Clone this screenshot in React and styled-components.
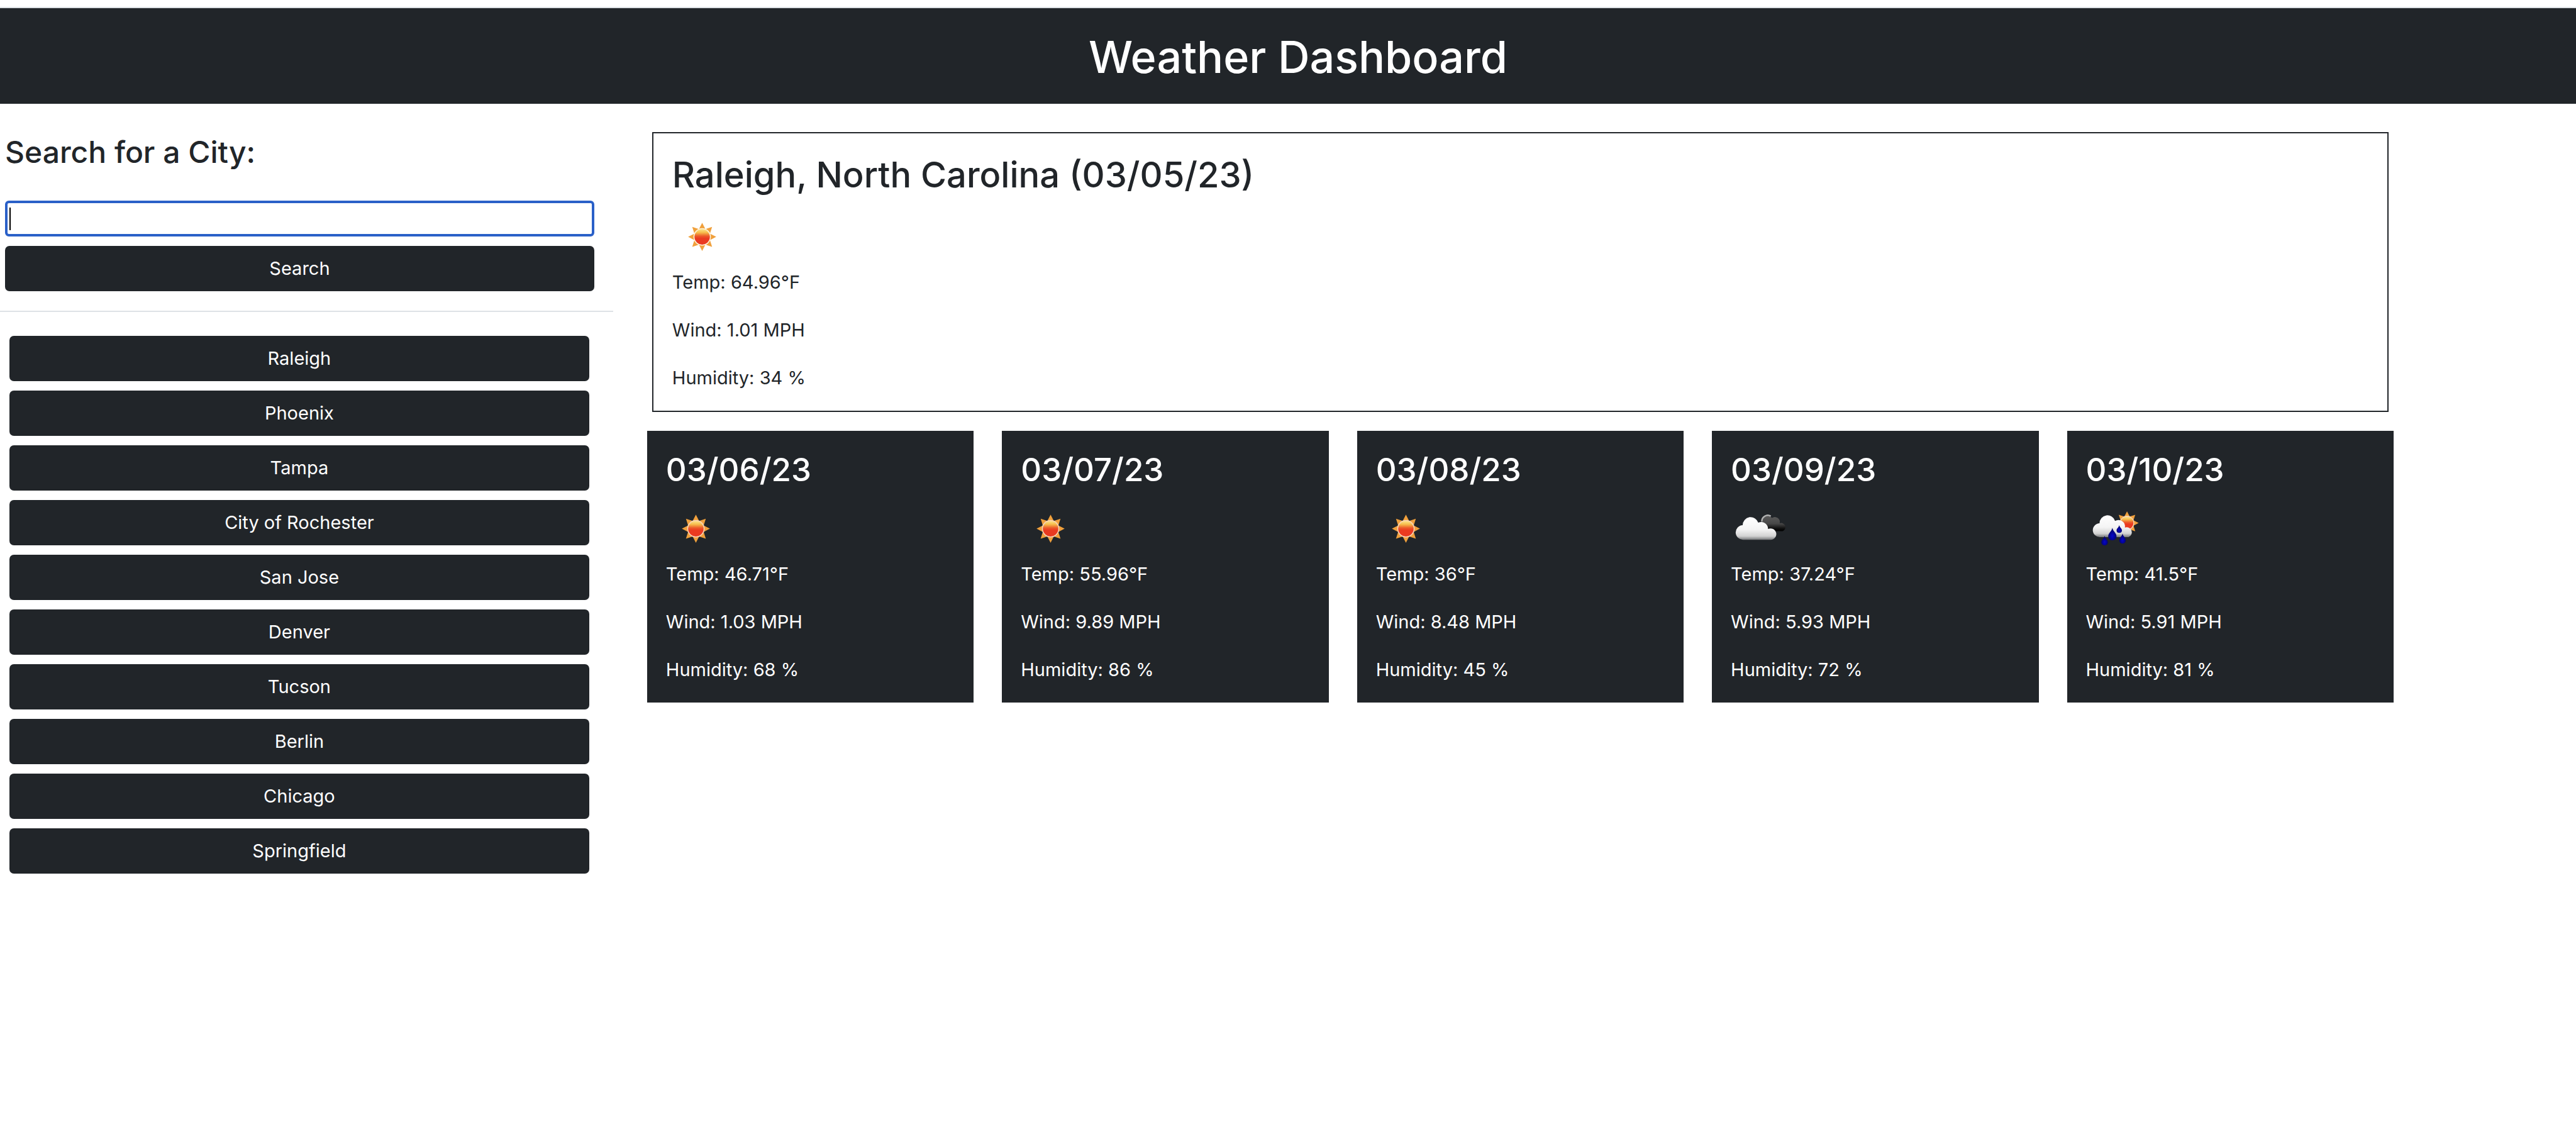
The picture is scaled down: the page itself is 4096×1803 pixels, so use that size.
import React from "react";
import styled, { createGlobalStyle } from "styled-components";

const ink = "#212529";
const line = "#dee2e6";

const GlobalStyle = createGlobalStyle`
  *, *::before, *::after { box-sizing: border-box; }
  body {
    margin: 0;
    background: #fff;
    color: ${ink};
    font-family: Inter, "Liberation Sans", sans-serif;
    font-size: 29px;
    line-height: 46px;
  }
  h1, h2, h3, p { margin: 0; }
`;

const Header = styled.header`
  margin-top: 11px;
  padding: 32px 0 28px 32px;
  border-top: 2px solid ${line};
  background: ${ink};
  background-clip: padding-box;
  color: #fff;
  text-align: center;
`;

const PageTitle = styled.h1`
  font-size: 70px;
  line-height: 92px;
  font-weight: 500;
`;

const Layout = styled.div`
  display: flex;
  align-items: flex-start;
  gap: 54px;
  padding-top: 45px;
`;

const Sidebar = styled.aside`
  flex: 0 0 23.8%;
`;

const SearchForm = styled.form`
  display: flex;
  flex-direction: column;
  gap: 15px;
  padding: 0 30px 31px 8px;
  border-bottom: 2px solid ${line};
`;

const SearchLabel = styled.label`
  margin-bottom: 30px;
  font-size: 48px;
  line-height: 64px;
  font-weight: 500;
`;

const SearchInput = styled.input`
  height: 57px;
  padding: 0 8px;
  border: 4px solid #2a60c8;
  border-radius: 6px;
  outline: 0;
  font: inherit;
  color: ${ink};
  background: linear-gradient(#000, #000) 3px 50% / 2px 36px no-repeat #fff;
`;

const Button = styled.button`
  display: block;
  width: 100%;
  height: 72px;
  padding: 0;
  border: 0;
  border-radius: 7px;
  background: ${ink};
  color: #fff;
  font: inherit;
  cursor: pointer;
`;

const History = styled.div`
  display: flex;
  flex-direction: column;
  gap: 15px;
  padding: 38px 38px 0 15px;
`;

const Main = styled.main`
  flex: 0 0 67.8%;
`;

const Current = styled.section`
  margin: 0 8px 30px;
  padding: 30px 30px 29px;
  border: 2px solid ${ink};
`;

const CurrentTitle = styled.h2`
  font-size: 56px;
  line-height: 73px;
  font-weight: 500;
`;

const Forecast = styled.section`
  display: grid;
  grid-template-columns: repeat(5, 1fr);
  gap: 45px;
`;

const Card = styled.article`
  padding: 30px 30px 29px;
  background: ${ink};
  color: #fff;
`;

const CardTitle = styled.h3`
  font-size: 51px;
  line-height: 64px;
  font-weight: 500;
`;

const Icon = styled.svg`
  display: block;
  width: 95px;
  height: 95px;
  margin-top: 16px;
`;

const Readings = styled.div`
  display: flex;
  flex-direction: column;
  gap: 30px;
`;

const star = (cx, cy, R, r) =>
  Array.from({ length: 16 }, (_, i) => {
    const a = (i * Math.PI) / 8 - Math.PI / 2;
    const d = i % 2 ? r : R;
    return `${cx + d * Math.cos(a)},${cy + d * Math.sin(a)}`;
  }).join(" ");

function Defs() {
  return (
    <defs>
      <linearGradient id="sunFill" x1="0" y1="0" x2="0" y2="1">
        <stop offset="0" stopColor="#fbe48a" />
        <stop offset="0.22" stopColor="#f6bd4b" />
        <stop offset="0.45" stopColor="#ec5a2a" />
        <stop offset="0.6" stopColor="#ea3a20" />
        <stop offset="1" stopColor="#ea3a20" />
      </linearGradient>
      <linearGradient id="cloudFill" x1="0" y1="0" x2="0" y2="1">
        <stop offset="0" stopColor="#fff" />
        <stop offset="0.55" stopColor="#f4f4f4" />
        <stop offset="0.84" stopColor="#d2d2d2" />
        <stop offset="1" stopColor="#77797b" />
      </linearGradient>
      <linearGradient id="darkFill" x1="0" y1="0" x2="0" y2="1">
        <stop offset="0" stopColor="#5a5a5a" />
        <stop offset="0.5" stopColor="#484848" />
        <stop offset="0.85" stopColor="#0c0c0c" />
        <stop offset="1" stopColor="#000" />
      </linearGradient>
      <radialGradient id="dropFill" cx="0.5" cy="0.65" r="0.5">
        <stop offset="0" stopColor="#0606cc" />
        <stop offset="1" stopColor="#020270" />
      </radialGradient>
    </defs>
  );
}

function Sun({ cx, cy, size, rim }) {
  return (
    <g>
      <polygon points={star(cx, cy, size, size * 0.6)} fill="#f0a03c" />
      <circle cx={cx} cy={cy} r={size * 0.62} fill={rim} />
      <circle cx={cx} cy={cy} r={size * 0.55} fill="url(#sunFill)" />
    </g>
  );
}

const drop = (x, y, w, h) =>
  `M${x} ${y}C${x + w * 0.1} ${y + h * 0.3} ${x + w / 2} ${y + h * 0.42} ${x + w / 2} ${y + h * 0.68}` +
  `A${w / 2} ${h * 0.32} 0 0 1 ${x - w / 2} ${y + h * 0.68}` +
  `C${x - w / 2} ${y + h * 0.42} ${x - w * 0.1} ${y + h * 0.3} ${x} ${y}Z`;

function WeatherIcon({ kind, dark }) {
  return (
    <Icon viewBox="0 0 100 100" role="img" aria-label={kind}>
      <Defs />
      {kind === "clear" && (
        <Sun cx={50} cy={48} size={23.5} rim={dark ? "#f6d3b8" : "#fff3dc"} />
      )}
      {kind === "clouds" && (
        <g>
          <path
            d="M51 38A10.5 10.5 0 0 1 69 30A8.5 8.5 0 0 1 82 39A6.5 6.5 0 0 1 87 52H62Z"
            fill="url(#darkFill)"
          />
          <path d="M52 36A10 10 0 0 1 67 27" fill="none" stroke="#b4b4b4" strokeWidth="2.5" />
          <path
            d="M21 66.5A12.2 12.2 0 0 1 20 42A13.3 13.3 0 0 1 46 38A11.5 11.5 0 0 1 62.500 48.500A9.500 9.500 0 1 1 67 66.500Z"
            fill="url(#cloudFill)"
          />
        </g>
      )}
      {kind === "rain" && (
        <g>
          <Sun cx={68.5} cy={38.5} size={19.5} rim="#f6d3b8" />
          <path
            d="M23 62A11.500 11.500 0 0 1 22.500 39A13.300 13.300 0 0 1 48.500 35A11 11 0 0 1 65 46A8.500 8.500 0 1 1 71 62Z"
            fill="url(#cloudFill)"
          />
          <path d={drop(55.5, 42, 9, 13)} fill="url(#dropFill)" />
          <path d={drop(44, 46.5, 14, 21)} fill="url(#dropFill)" />
          <path d={drop(31, 60, 11, 16)} fill="url(#dropFill)" />
          <path d={drop(61, 56, 11, 17)} fill="url(#dropFill)" />
        </g>
      )}
    </Icon>
  );
}

function Conditions({ temp, wind, humidity }) {
  return (
    <Readings>
      <p>Temp: {temp}°F</p>
      <p>Wind: {wind} MPH</p>
      <p>Humidity: {humidity} %</p>
    </Readings>
  );
}

const cities = [
  "Raleigh", "Phoenix", "Tampa", "City of Rochester", "San Jose",
  "Denver", "Tucson", "Berlin", "Chicago", "Springfield",
];

const days = [
  { date: "03/06/23", kind: "clear", temp: "46.71", wind: "1.03", humidity: 68 },
  { date: "03/07/23", kind: "clear", temp: "55.96", wind: "9.89", humidity: 86 },
  { date: "03/08/23", kind: "clear", temp: "36", wind: "8.48", humidity: 45 },
  { date: "03/09/23", kind: "clouds", temp: "37.24", wind: "5.93", humidity: 72 },
  { date: "03/10/23", kind: "rain", temp: "41.5", wind: "5.91", humidity: 81 },
];

export default function App() {
  return (
    <>
      <GlobalStyle />
      <Header>
        <PageTitle>Weather Dashboard</PageTitle>
      </Header>
      <Layout>
        <Sidebar>
          <SearchForm onSubmit={(e) => e.preventDefault()}>
            <SearchLabel htmlFor="city">Search for a City:</SearchLabel>
            <SearchInput id="city" type="text" />
            <Button type="submit">Search</Button>
          </SearchForm>
          <History>
            {cities.map((city) => (
              <Button key={city} type="button">{city}</Button>
            ))}
          </History>
        </Sidebar>
        <Main>
          <Current>
            <CurrentTitle>Raleigh, North Carolina (03/05/23)</CurrentTitle>
            <WeatherIcon kind="clear" />
            <Conditions temp="64.96" wind="1.01" humidity={34} />
          </Current>
          <Forecast>
            {days.map((day) => (
              <Card key={day.date}>
                <CardTitle>{day.date}</CardTitle>
                <WeatherIcon kind={day.kind} dark />
                <Conditions {...day} />
              </Card>
            ))}
          </Forecast>
        </Main>
      </Layout>
    </>
  );
}
